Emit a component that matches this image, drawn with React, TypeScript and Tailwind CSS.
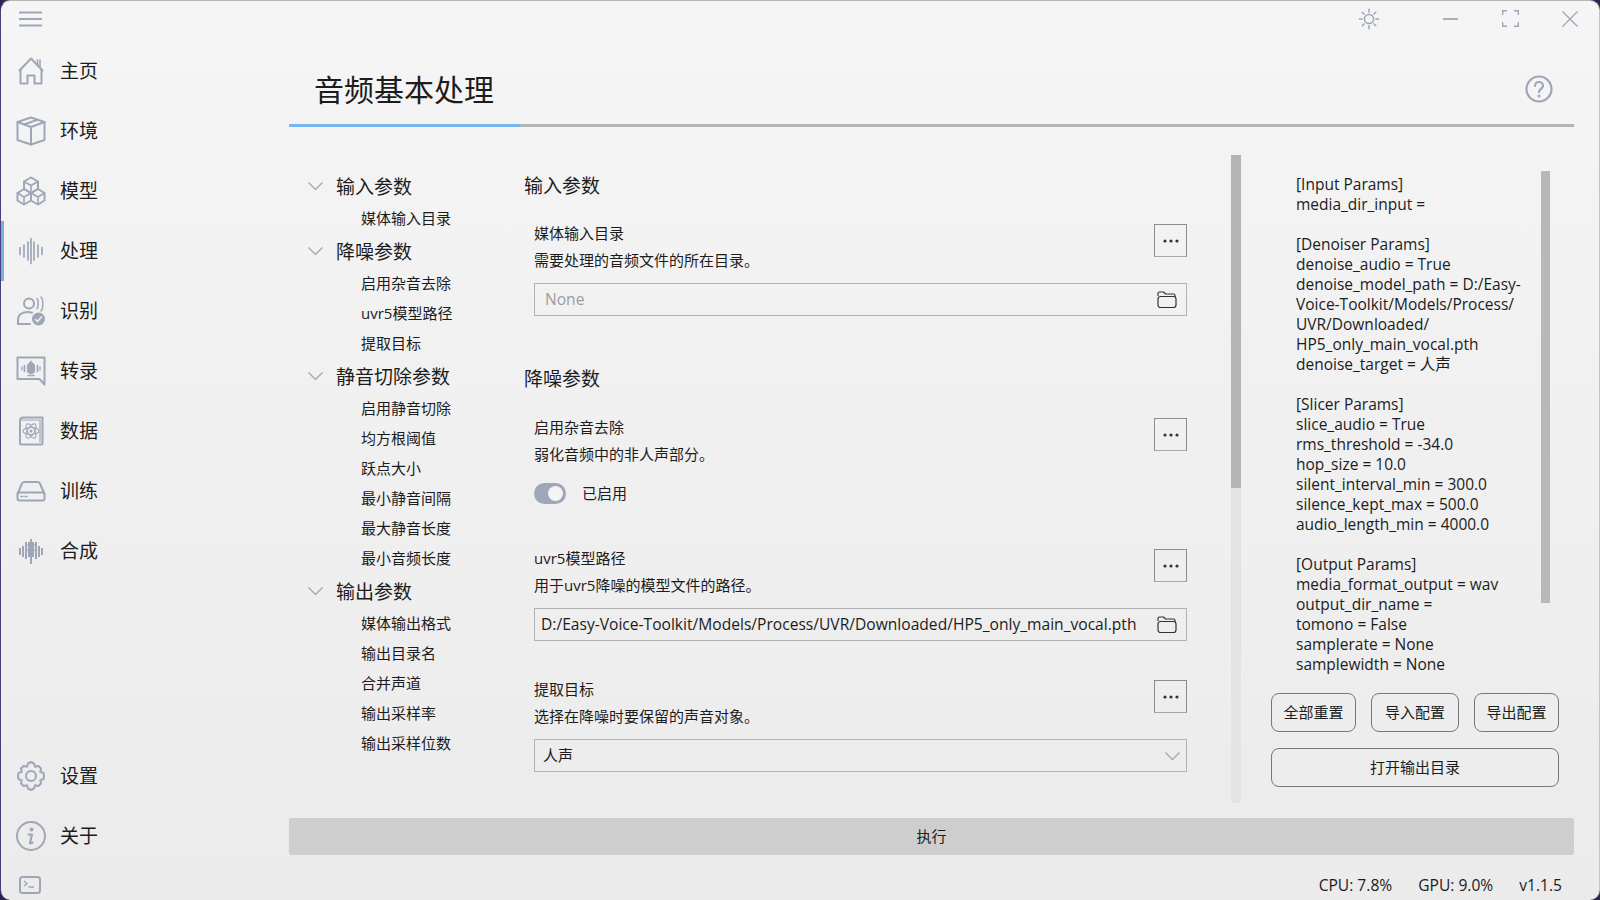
import { ReactNode } from "react";

const ICON = "#9ea6b7";

const Svg = ({ children, size = 30 }: { children: ReactNode; size?: number }) => (
    <svg width={size} height={size} viewBox="0 0 30 30" fill="none" stroke={ICON} strokeWidth={2} strokeLinejoin="round" strokeLinecap="round">
        {children}
    </svg>
);

const navIcons: Record<string, ReactNode> = {
    home: (
        <Svg>
            <path d="M3.500 14.500 15 2.500l11.500 12" />
            <path d="M4.500 13.500V27.500H11.500V19.500H18.500V27.500H25.500V13.500" />
            <path d="M21.500 4v5M24 4v7" strokeWidth={1.6} />
        </Svg>
    ),
    env: (
        <Svg>
            <path d="M15 1.500 28.500 6v18L15 28.500 1.500 24V6Z" />
            <path d="M1.500 6 15 11l13.500-5M15 11v17.500" />
            <path d="M8 8.500 21 4" />
        </Svg>
    ),
    model: (
        <Svg>
            <path d="M15 1.500 22 5.500V13L15 17 8 13V5.500Z" />
            <path d="M8 5.500 15 9.500l7-4M15 9.500V17" strokeWidth={1.6} />
            <path d="M8 13 15 17V24.500L8 28.500 1.500 24.500V17Z" />
            <path d="M1.500 17 8 21l7-4M8 21v7.500" strokeWidth={1.6} />
            <path d="M22 13 28.500 17V24.500L22 28.500 15 24.500V17Z" />
            <path d="M15 17 22 21l6.500-4M22 21v7.500" strokeWidth={1.6} />
        </Svg>
    ),
    process: (
        <Svg>
            <path d="M4 11.500v7M8 9v12M12 6v18M15 2.500v25M18 6v18M22 9v12M26 11.500v7" strokeWidth={1.7} />
        </Svg>
    ),
    recognize: (
        <Svg>
            <circle cx="13" cy="7.500" r="5" />
            <path d="M2 28v-4c0-5 4-8 10-8 2 0 3 .300 4 .700" />
            <path d="M2 28h12" />
            <path d="M21 2.500c1.500 1.300 1.500 8.700 0 10M25 1c2.500 2 2.500 11.500 0 14" strokeWidth={1.5} />
            <circle cx="22.500" cy="23" r="6.500" fill={ICON} stroke="none" />
            <path d="M19.500 23.500 21.500 25.500 25.500 21" stroke="#f2f2f2" strokeWidth={1.5} />
        </Svg>
    ),
    transcribe: (
        <Svg>
            <path d="M1.500 1.500H28.500V28.500L23.500 23H1.500Z" />
            <path d="M15 4.500 19 9V15C19 17 17 18 15 18S11 17 11 15V9Z" fill={ICON} stroke="none" />
            <path d="M12 19.500H18" strokeWidth={1.500} />
            <path d="M8.500 9.500v6M21.500 9.500v6" strokeWidth={1.700} />
            <path d="M6 11v3M24 11v3" strokeWidth={1.300} />
        </Svg>
    ),
    data: (
        <Svg>
            <path d="M7 1.500H26.500V27C26.500 28 26 28.500 25 28.500H5.500C4.500 28.500 4 28 4 27V5C4 3 5 1.500 7 1.500Z" />
            <path d="M6 4H24V26" strokeWidth={1.200} />
            <g strokeWidth={1.100}>
                <ellipse cx="15" cy="15" rx="8" ry="3.500" />
                <ellipse cx="15" cy="15" rx="8" ry="3.500" transform="rotate(60 15 15)" />
                <ellipse cx="15" cy="15" rx="8" ry="3.500" transform="rotate(120 15 15)" />
            </g>
            <circle cx="15" cy="15" r="1.500" fill={ICON} stroke="none" />
        </Svg>
    ),
    train: (
        <Svg>
            <path d="M1.500 18 6 7.500C6.500 6.500 7 6 8.500 6H21.500C23 6 23.500 6.500 24 7.500L28.500 18" />
            <rect x="1.500" y="16.500" width="27" height="8" rx="2" />
            <path d="M5 20.500h2M9 20.500h2" strokeWidth={1.500} />
        </Svg>
    ),
    synth: (
        <Svg>
            <path d="M4 12v7M7 10v11M10 6v17M13 6v15M15 3v25M17 6v15M20 6v17M23 10v11M26 12v7" strokeWidth={2} strokeLinecap="butt" />
            <path d="M9 9h12M9 14h12" strokeWidth={1.200} strokeLinecap="butt" />
        </Svg>
    ),
    settings: (
        <Svg>
            <path d="M12 2.500 15 1l3 1.500 1 3.300 3.500-.8 2.500 2.500-.7 3.300 3.200 1.200.5 3.500-.5 2.500-3.200 1.400.7 3.100L22.500 25l-3.500-.8-1 3.300L15 29l-3-1.500-1-3.300-3.500.8L5 22.500l.7-3.100-3.200-1.400L2 15l.5-3 3.200-1.200L5 7.500 7.500 5l3.500.8Z" />
            <circle cx="15" cy="15" r="5" />
        </Svg>
    ),
    about: (
        <Svg>
            <circle cx="15" cy="15" r="14" />
            <circle cx="15.500" cy="8.500" r="1.900" fill={ICON} stroke="none" />
            <path d="M12.500 13.500H16L14 21.500C13.800 22.500 14.500 22.800 16.500 21.500" strokeWidth={2.200} />
        </Svg>
    ),
};

const navTop = [
    ["home", "主页"],
    ["env", "环境"],
    ["model", "模型"],
    ["process", "处理"],
    ["recognize", "识别"],
    ["transcribe", "转录"],
    ["data", "数据"],
    ["train", "训练"],
    ["synth", "合成"],
];

const NavItem = ({ icon, label, active }: { icon: string; label: string; active?: boolean }) => (
    <div className="relative flex h-[60px] items-center pl-[15px]">
        {active && <div className="absolute left-0 top-0 h-full w-[3px] bg-[#74b0ea]" />}
        {navIcons[icon]}
        <span className="ml-[14px] text-[19px] text-[#1c1c1c]">{label}</span>
    </div>
);

const Sidebar = () => (
    <div className="flex w-[288px] shrink-0 flex-col">
        <div className="flex h-[40px] items-start pl-[18px] pt-[10px]">
            <svg width="23" height="16" viewBox="0 0 23 16" stroke={ICON} strokeWidth="2.200">
                <path d="M0 1.500h23M0 8h23M0 14.500h23" />
            </svg>
        </div>
        {navTop.map(([icon, label]) => (
            <NavItem key={icon} icon={icon} label={label} active={icon === "process"} />
        ))}
        <div className="flex-1" />
        <NavItem icon="settings" label="设置" />
        <NavItem icon="about" label="关于" />
        <div className="flex h-[34px] items-start pl-[18px] pt-[10px]">
            <svg width="22" height="18" viewBox="0 0 22 18" fill="none" stroke={ICON} strokeWidth="2">
                <rect x="1" y="1" width="20" height="16" rx="2.500" />
                <path d="M5 5l3 2.500L5 10M9.500 11H15" strokeWidth="1.300" />
            </svg>
        </div>
    </div>
);

const TitleBar = () => (
    <div className="flex h-[35px] items-center justify-end">
        <svg width="22" height="22" viewBox="0 0 24 24" fill="none" stroke={ICON} strokeWidth="1.700" strokeLinecap="round">
            <circle cx="12" cy="12" r="5" />
            <path d="M12 1.500v3M12 19.500v3M1.500 12h3M19.500 12h3M4.600 4.600l2 2M17.400 17.400l2 2M4.600 19.400l2-2M17.400 6.600l2-2" />
        </svg>
        <div className="ml-[63px] h-[2px] w-[15px] bg-[#a9afbc]" />
        <svg className="ml-[44px]" width="17" height="17" viewBox="0 0 17 17" fill="none" stroke={ICON} strokeWidth="1.400">
            <path d="M.7 5V.7H5M12 .7h4.300V5M16.300 12v4.300H12M5 16.300H.7V12" />
        </svg>
        <svg className="ml-[43px] mr-[21px]" width="16" height="16" viewBox="0 0 16 16" fill="none" stroke={ICON} strokeWidth="1.300">
            <path d="M.5.500l15 15M15.500.500l-15 15" />
        </svg>
    </div>
);

const treeData: [string, string[]][] = [
    ["输入参数", ["媒体输入目录"]],
    ["降噪参数", ["启用杂音去除", "uvr5模型路径", "提取目标"]],
    ["静音切除参数", ["启用静音切除", "均方根阈值", "跃点大小", "最小静音间隔", "最大静音长度", "最小音频长度"]],
    ["输出参数", ["媒体输出格式", "输出目录名", "合并声道", "输出采样率", "输出采样位数"]],
];

const Chevron = ({ className }: { className?: string }) => (
    <svg className={className} width="15" height="8" viewBox="0 0 15 8" fill="none" stroke="#9ea6b7" strokeWidth="1.300">
        <path d="M.5.500 7.500 7.500 14.500.500" />
    </svg>
);

const Tree = () => (
    <div className="w-[235px] shrink-0 pl-[19px] pt-[15px]">
        {treeData.map(([head, subs]) => (
            <div key={head}>
                <div className="flex h-[35px] items-center">
                    <Chevron className="mb-[3px]" />
                    <span className="ml-[13px] text-[19px] text-[#1c1c1c]">{head}</span>
                </div>
                {subs.map((s) => (
                    <div key={s} className="flex h-[30px] items-center pb-[4px] pl-[53px] text-[15px] text-[#1c1c1c]">
                        {s}
                    </div>
                ))}
            </div>
        ))}
    </div>
);

const MoreButton = () => (
    <div className="mt-[4px] flex h-[33px] w-[33px] shrink-0 items-center justify-center border border-[#8d8d8d] border-b-[#a8a8a8]">
        <svg width="16" height="4" viewBox="0 0 16 4" fill="#333">
            <circle cx="2" cy="2" r="1.600" />
            <circle cx="8" cy="2" r="1.600" />
            <circle cx="14" cy="2" r="1.600" />
        </svg>
    </div>
);

const FolderIcon = () => (
    <svg className="mr-[9px]" width="20" height="18" viewBox="0 0 20 18" fill="none" stroke="#333" strokeWidth="1.200" strokeLinejoin="round">
        <path d="M1 5V2.500C1 1.500 1.500 1 2.500 1H6.500L8.500 3H16.500C17.500 3 18 3.500 18 4.500V6" />
        <rect x="1" y="5.500" width="18" height="11" rx="2.500" />
    </svg>
);

const Item = ({ title, desc, children }: { title: string; desc: string; children: ReactNode }) => (
    <div>
        <div className="flex justify-between">
            <div>
                <div className="mb-[1px] text-[15px] leading-[26px] text-[#1c1c1c]">{title}</div>
                <div className="text-[15px] leading-[27px] text-[#1c1c1c]">{desc}</div>
            </div>
            <MoreButton />
        </div>
        {children}
    </div>
);

const Field = ({ children, right }: { children: ReactNode; right: ReactNode }) => (
    <div className="mt-[9px] flex h-[33px] items-center justify-between border border-[#b2b2b2] text-[15.6px]">
        {children}
        {right}
    </div>
);

const Form = () => (
    <div className="flex h-[648px] flex-1 gap-[44px]">
        <div className="w-[663px] pt-[13px]">
            <div className="text-[19px] leading-[36px] text-[#1c1c1c]">输入参数</div>
            <div className="ml-[10px] mt-[16px]">
                <Item title="媒体输入目录" desc="需要处理的音频文件的所在目录。">
                    <Field right={<FolderIcon />}>
                        <span className="pl-[10px] text-[#9c9c9c]">None</span>
                    </Field>
                </Item>
            </div>
            <div className="mt-[45px] text-[19px] leading-[36px] text-[#1c1c1c]">降噪参数</div>
            <div className="ml-[10px] mt-[17px]">
                <Item title="启用杂音去除" desc="弱化音频中的非人声部分。">
                    <div className="mt-[15px] flex h-[21px] items-center">
                        <div className="flex h-[21px] w-[32px] items-center justify-end rounded-full bg-[#9ea6b7] pr-[3px]">
                            <div className="h-[15px] w-[15px] rounded-full bg-[#f4f4f4]" />
                        </div>
                        <span className="ml-[16px] text-[15px] text-[#1c1c1c]">已启用</span>
                    </div>
                </Item>
                <div className="mt-[41px]">
                    <Item title="uvr5模型路径" desc="用于uvr5降噪的模型文件的路径。">
                        <Field right={<FolderIcon />}>
                            <span className="pl-[6px] text-[#1c1c1c]">D:/Easy-Voice-Toolkit/Models/Process/UVR/Downloaded/HP5_only_main_vocal.pth</span>
                        </Field>
                    </Item>
                </div>
                <div className="mt-[35px]">
                    <Item title="提取目标" desc="选择在降噪时要保留的声音对象。">
                        <Field right={<Chevron className="mr-[6px]" />}>
                            <span className="pl-[8px] text-[15px] text-[#1c1c1c]">人声</span>
                        </Field>
                    </Item>
                </div>
            </div>
        </div>
        <div className="w-[10px] bg-[#e3e3e3]">
            <div className="h-[333px] w-full bg-[#b4b4b4]" />
        </div>
    </div>
);

const summary = [
    "[Input Params]",
    "media_dir_input =",
    "",
    "[Denoiser Params]",
    "denoise_audio = True",
    "denoise_model_path = D:/Easy-",
    "Voice-Toolkit/Models/Process/",
    "UVR/Downloaded/",
    "HP5_only_main_vocal.pth",
    "denoise_target = 人声",
    "",
    "[Slicer Params]",
    "slice_audio = True",
    "rms_threshold = -34.0",
    "hop_size = 10.0",
    "silent_interval_min = 300.0",
    "silence_kept_max = 500.0",
    "audio_length_min = 4000.0",
    "",
    "[Output Params]",
    "media_format_output = wav",
    "output_dir_name =",
    "tomono = False",
    "samplerate = None",
    "samplewidth = None",
];

const OutlineButton = ({ label, className }: { label: string; className: string }) => (
    <div className={`flex h-[39px] items-center justify-center rounded-[8px] border border-[#777] text-[15px] text-[#1c1c1c] ${className}`}>
        {label}
    </div>
);

const RightPanel = () => (
    <div className="mr-[15px] w-[288px] shrink-0">
        <div className="flex h-[520px] pl-[25px] pt-[16px]">
            <div className="h-[500px] w-[245px] pt-[3px] text-[15.5px] leading-[20px] text-[#1c1c1c]">
                {summary.map((line, i) => (
                    <div key={i} className="h-[20px] whitespace-nowrap">
                        {line}
                    </div>
                ))}
            </div>
            <div className="h-[432px] w-[9px] bg-[#b8b8b8]" />
        </div>
        <div className="flex justify-between pt-[18px]">
            <OutlineButton label="全部重置" className="w-[85px]" />
            <OutlineButton label="导入配置" className="w-[88px]" />
            <OutlineButton label="导出配置" className="w-[85px]" />
        </div>
        <OutlineButton label="打开输出目录" className="mt-[16px] w-full" />
    </div>
);

const App = () => (
    <div
        className="h-[900px] w-[1600px] overflow-hidden bg-[#2d2450] text-[#1c1c1c]"
        style={{ fontFamily: '"Open Sans", "Noto Sans CJK SC", sans-serif' }}
    >
        <div className="flex h-full w-full overflow-hidden rounded-[10px] border-l border-t border-r border-l-[#4a3f78] border-t-[#b5b5b5] border-r-[#c4c4c4] bg-gradient-to-b from-[#f5f5f5] to-[#ebebeb]">
            <Sidebar />
            <div className="flex min-w-0 flex-1 flex-col">
                <TitleBar />
                <div className="mr-[25px]">
                    <div className="flex h-[88px] items-center justify-between pl-[25px] pr-[21px] pt-[18px]">
                        <span className="text-[30px] text-[#1c1c1c]">音频基本处理</span>
                        <svg width="28" height="28" viewBox="0 0 28 28" fill="none" stroke={ICON} strokeWidth="2.200">
                            <circle cx="14" cy="14" r="12.500" />
                            <path d="M10 11c0-2.500 2-4 4-4s4 1.500 4 3.800c0 3-4 3.200-4 6.200" strokeLinecap="round" />
                            <circle cx="14" cy="21" r="1.500" fill={ICON} stroke="none" />
                        </svg>
                    </div>
                    <div className="flex h-[3px]">
                        <div className="w-[231px] bg-[#74b7f0]" />
                        <div className="flex-1 bg-[#b5b5b5]" />
                    </div>
                    <div className="mt-[28px] flex h-[648px]">
                        <Tree />
                        <Form />
                        <RightPanel />
                    </div>
                    <div className="mt-[15px] flex h-[37px] items-center justify-center rounded-[2px] bg-[#cecece] text-[15px] text-[#1c1c1c]">
                        执行
                    </div>
                    <div className="mr-[12px] flex h-[45px] items-center justify-end gap-[26px] pt-[16px] text-[15.6px] text-[#1c1c1c]">
                        <span>CPU: 7.8%</span>
                        <span>GPU: 9.0%</span>
                        <span>v1.1.5</span>
                    </div>
                </div>
            </div>
        </div>
    </div>
);

export default App;
